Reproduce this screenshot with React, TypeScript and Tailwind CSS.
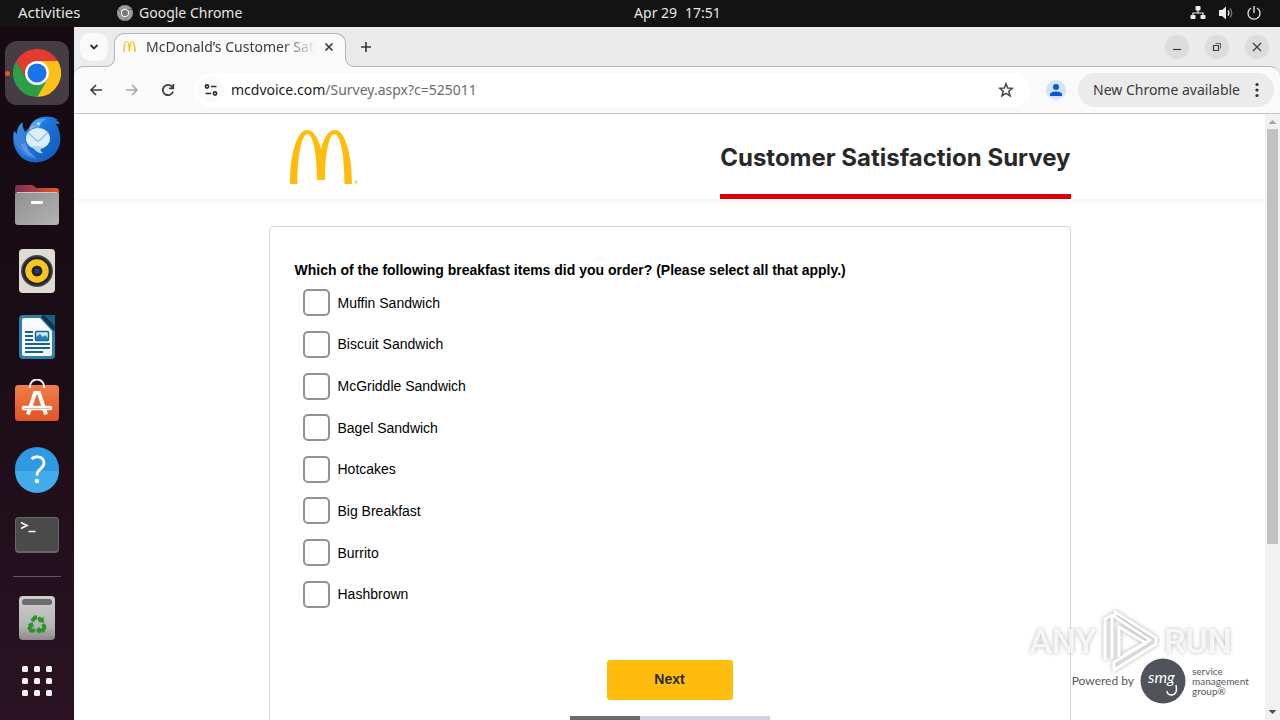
import type { ReactNode } from 'react';

const options = [
  'Muffin Sandwich',
  'Biscuit Sandwich',
  'McGriddle Sandwich',
  'Bagel Sandwich',
  'Hotcakes',
  'Big Breakfast',
  'Burrito',
  'Hashbrown',
];

const archPath =
  'M0 54C0 24 7 0 17 0C23 0 28 7 31 19C34 7 39 0 45 0C55 0 62 24 62 54H54.5C54.5 26 50.5 4 44.5 4C39 4 35 24 35 50H27C27 24 23 4 17.5 4C11.5 4 7.5 26 7.5 54Z';

function ChromeIcon() {
  return (
    <svg viewBox="0 0 48 48" className="size-12">
      <path d="M24 12H44.8A24 24 0 0 1 24 48L34.4 30Z" fill="#fbc116" />
      <path d="M34.4 30L24 48A24 24 0 0 1 3.2 12L13.6 30Z" fill="#2a9f46" />
      <path d="M24 12H44.8A24 24 0 0 0 3.2 12L13.6 30Z" fill="#e33b2e" />
      <path d="M24 24L34.4 30L24 48L22 36Z" fill="#2a9f46" />
      <circle cx="24" cy="24" r="12" fill="#fff" />
      <circle cx="24" cy="24" r="9.6" fill="#1a73e8" />
    </svg>
  );
}

function ThunderbirdIcon() {
  return (
    <svg viewBox="0 0 48 48" className="size-12">
      <defs>
        <linearGradient id="bird" x1="0" y1="0" x2="1" y2="1">
          <stop offset="0" stopColor="#3fa3f3" />
          <stop offset=".5" stopColor="#1b70d6" />
          <stop offset="1" stopColor="#1256b8" />
        </linearGradient>
      </defs>
      <path
        d="M10 7C6 10 4 13 4 19L1 16C-1 26 1 34 7 41C13 47 22 49 31 46C42 42 49 32 47 20C46 15 45 12 43 9H47C45 5 43 5 41 5H45C40 1 34 1 30 2C23 3 18 7 16 13L12 17C10 13 9 11 10 7Z"
        fill="url(#bird)"
      />
      <path d="M17 13C19 6 26 3 33 4C29 6 27 9 26 13Z" fill="#4ba7f5" />
      <path d="M1 19C2 33 10 43 25 44C16 40 12 33 12 24L9 15C6 18 5 21 5 24Z" fill="#3b83df" />
      <path d="M8 29C10 37 15 41 23 42C17 38 14 33 13 28Z" fill="#7d9fe6" opacity=".6" />
      <path d="M17 12L22 10C20 13 18 15 16 15Z" fill="#d99ab8" />
      <ellipse cx="25" cy="23.5" rx="12" ry="10.5" fill="#d9effc" />
      <path d="M19 31C22 36 26 39 30 38C27 36 27 34 29 31Z" fill="#acd6fa" />
      <path d="M15 17.5L23 25Q25 27 27 25L35 17" fill="none" stroke="#9cc3e0" strokeWidth="1.6" />
      <circle cx="25.5" cy="8.8" r="1.2" fill="#fff" />
    </svg>
  );
}

function FilesIcon() {
  return (
    <svg viewBox="0 0 48 48" className="size-12">
      <defs>
        <linearGradient id="folder-back" x1="0" x2="1">
          <stop offset="0" stopColor="#7d2d58" />
          <stop offset="1" stopColor="#e95420" />
        </linearGradient>
        <linearGradient id="folder-front" x1="0" y1="0" x2="1" y2="1">
          <stop offset="0" stopColor="#8f8f8f" />
          <stop offset="1" stopColor="#b3b3b3" />
        </linearGradient>
      </defs>
      <path d="M2 16V7Q2 4 5 4H18Q20 4 21 5L23 7H43Q46 7 46 10V16Z" fill="url(#folder-back)" />
      <rect x="2" y="11" width="44" height="33" rx="3" fill="url(#folder-front)" />
      <path d="M4 11.5H44" stroke="#c8c8c8" />
      <rect x="18" y="20" width="12" height="3" rx="1" fill="#fff" />
    </svg>
  );
}

function RhythmboxIcon() {
  return (
    <svg viewBox="0 0 48 48" className="size-12">
      <rect x="6" y="2" width="36" height="44" rx="4" fill="#dfdbd2" />
      <circle cx="24" cy="24" r="16" fill="#4a4a52" />
      <circle cx="24" cy="24" r="14.5" fill="#24242a" />
      <circle cx="24" cy="24" r="8.5" fill="none" stroke="#f7c520" strokeWidth="6.5" />
      <circle cx="24" cy="24" r="5.3" fill="#1c252c" />
      <circle cx="24" cy="24" r="2.5" fill="#34424b" />
    </svg>
  );
}

function WriterIcon() {
  return (
    <svg viewBox="0 0 48 48" className="size-12">
      <path d="M10 2H30L42 15V42Q42 46 38 46H10Q6 46 6 42V6Q6 2 10 2Z" fill="#2b7fae" />
      <path d="M31 2H42V14Z" fill="#175f86" />
      <path d="M29 3L42 17" stroke="#0b344d" strokeWidth="3" />
      <path d="M9 7Q9 5 11 5H27L39 18V41Q39 43 37 43H11Q9 43 9 41Z" fill="#f7fbff" />
      <path
        d="M12 19H20M12 23H20M12 27H20M12 31H37M12 35H37M12 39H30"
        stroke="#16658f"
        strokeWidth="2"
      />
      <rect x="22.5" y="18.5" width="13" height="9" rx="1" fill="#cbe7f7" stroke="#16658f" strokeWidth="1.5" />
      <path d="M23 27V24L27 21L30 24L32 22L35 25V27Z" fill="#2b7fae" />
    </svg>
  );
}

function SoftwareIcon() {
  return (
    <svg viewBox="0 0 48 48" className="size-12">
      <defs>
        <linearGradient id="bag" x1="0" y1="0" x2="0" y2="1">
          <stop offset="0" stopColor="#f27d4a" />
          <stop offset="1" stopColor="#dd5623" />
        </linearGradient>
      </defs>
      <rect x="2" y="6" width="44" height="36" rx="3.5" fill="url(#bag)" />
      <path d="M17 9V7A7 6.5 0 0 1 31 7V9" fill="none" stroke="#f4efe8" strokeWidth="2" />
      <path d="M15 35.5L22 14H26L33 35.5" fill="none" stroke="#fff" strokeWidth="4" />
      <path d="M11 29H37" stroke="#fff" strokeWidth="4.5" strokeLinecap="round" />
      <path d="M11 29.5H37" stroke="#f3b79f" strokeWidth="1" />
    </svg>
  );
}

function HelpIcon() {
  return (
    <svg viewBox="0 0 48 48" className="size-12">
      <circle cx="24" cy="24" r="22" fill="#2f9ae3" />
      <path d="M2 26A22 22 0 0 0 46 26Z" fill="#43aceb" />
      <path
        d="M18.5 14Q21 11.5 25 11.8Q31 12.3 31 18Q31 21 27.5 23.8Q24 26.5 24 30.5"
        fill="none"
        stroke="#fff"
        strokeWidth="2.8"
      />
      <circle cx="24" cy="36" r="2.3" fill="#fff" />
    </svg>
  );
}

function TerminalIcon() {
  return (
    <svg viewBox="0 0 48 48" className="size-12">
      <rect x="2" y="6" width="44" height="36" rx="4" fill="#666" />
      <rect x="3" y="7" width="42" height="33" rx="3" fill="#4a4a4a" />
      <path d="M8 11.5L14 14.5L8 17.5M15.5 20.5H22.5" fill="none" stroke="#fff" strokeWidth="1.7" />
    </svg>
  );
}

function TrashIcon() {
  return (
    <svg viewBox="0 0 48 48" className="size-12">
      <defs>
        <linearGradient id="bin" x1="0" y1="0" x2="0" y2="1">
          <stop offset="0" stopColor="#cfcfcf" />
          <stop offset=".7" stopColor="#b4b4b4" />
          <stop offset="1" stopColor="#8e868c" />
        </linearGradient>
      </defs>
      <rect x="6" y="2" width="36" height="44" rx="4" fill="url(#bin)" />
      <rect x="9" y="5" width="30" height="6" rx="2.5" fill="#6c6c6c" />
      <g fill="none" stroke="#2b9327" strokeWidth="3.8">
        <path d="M19 27L22 23.5H24" />
        <path d="M25.5 23.5L28.5 27" />
        <path d="M30 30L31.5 33L30 36.5H26" />
        <path d="M22 36.5H18L16.5 34L18 31" />
      </g>
      <path d="M30.5 22.5L31 29L25 27.5ZM26.5 32.5V40L22.5 36.5ZM14.5 30.5L19.5 28L21 33.5Z" fill="#2b9327" />
    </svg>
  );
}

function AppsIcon() {
  return (
    <svg viewBox="0 0 30 30" className="size-[30px]" fill="#f6f3f5">
      {[0, 12, 24].map((y) =>
        [0, 12, 24].map((x) => <rect key={`${x}-${y}`} x={x} y={y} width="6" height="6" rx="1.5" />),
      )}
    </svg>
  );
}

function DockItem({ label, children }: { label: string; children: ReactNode }) {
  return (
    <button aria-label={label} className="flex h-[66px] w-full shrink-0 items-center justify-center">
      {children}
    </button>
  );
}

function Dock() {
  return (
    <nav
      aria-label="Dock"
      className="flex w-[74px] shrink-0 flex-col bg-linear-to-b from-[#150a11] via-[#1b0d16] to-[#2b1322] pt-[13px]"
    >
      <button aria-label="Google Chrome" className="relative flex h-[66px] w-full shrink-0 items-center justify-center">
        <span className="flex size-16 items-center justify-center rounded-xl bg-[#463c44]">
          <ChromeIcon />
        </span>
        <span className="absolute left-[5px] size-[5px] rounded-full bg-[#e95420]" />
      </button>
      <DockItem label="Thunderbird"><ThunderbirdIcon /></DockItem>
      <DockItem label="Files"><FilesIcon /></DockItem>
      <DockItem label="Rhythmbox"><RhythmboxIcon /></DockItem>
      <DockItem label="LibreOffice Writer"><WriterIcon /></DockItem>
      <DockItem label="Ubuntu Software"><SoftwareIcon /></DockItem>
      <DockItem label="Help"><HelpIcon /></DockItem>
      <DockItem label="Terminal"><TerminalIcon /></DockItem>
      <div className="mx-[13px] my-2 h-px shrink-0 bg-[#65595f]" />
      <DockItem label="Trash"><TrashIcon /></DockItem>
      <button aria-label="Show applications" className="flex h-[60px] w-full shrink-0 items-center justify-center">
        <AppsIcon />
      </button>
    </nav>
  );
}

function TopBar() {
  return (
    <header className="flex h-[27px] shrink-0 items-center bg-[#131313] px-[18px] pb-px text-sm text-[#e6e6e6]">
      <button className="w-[75px] text-left text-[15px]">Activities</button>
      <div className="grid flex-1 grid-cols-[1fr_auto_1fr] items-center">
        <button className="ml-6 flex items-center gap-1.5 justify-self-start">
          <svg viewBox="0 0 16 16" className="size-4">
            <circle cx="8" cy="8" r="8" fill="#9b9b9b" />
            <path d="M8 4.5H15M5 10L1.5 4M11 10L7.5 16" stroke="#666" />
            <circle cx="8" cy="8" r="3.6" fill="#777" stroke="#eee" strokeWidth="1.2" />
          </svg>
          Google Chrome
        </button>
        <button className="flex gap-2">
          <span>Apr 29</span>
          <span>17:51</span>
        </button>
        <div className="flex items-center justify-end gap-3">
          <svg viewBox="0 0 16 16" className="size-4" fill="#eee">
            <rect x="5.5" y="1" width="5" height="4.5" rx=".8" />
            <rect x=".5" y="10" width="5" height="4" rx=".8" />
            <rect x="10.5" y="10" width="5" height="4" rx=".8" />
            <path d="M3 10V8H13V10M8 5V8" fill="none" stroke="#eee" strokeWidth="1.2" />
          </svg>
          <svg viewBox="0 0 16 16" className="size-4" fill="none" stroke="#eee" strokeWidth="1.3">
            <path d="M1 5H4L8 1.5V14.5L4 11H1Z" fill="#eee" stroke="none" />
            <path d="M10 5.5Q11.8 8 10 10.5" />
            <path d="M12 3.5Q15.5 8 12 12.5" stroke="#777" />
          </svg>
          <svg viewBox="0 0 16 16" className="size-4" fill="none" stroke="#eee" strokeWidth="1.3">
            <path d="M5 3A6 6 0 1 0 11 3M8 1V8" />
          </svg>
        </div>
      </div>
    </header>
  );
}

function WindowControl({ label, children }: { label: string; children: ReactNode }) {
  return (
    <button aria-label={label} className="flex size-6 items-center justify-center rounded-full bg-[#dcdcdc]">
      <svg viewBox="0 0 12 12" className="size-3" fill="none" stroke="#3c3c3c" strokeWidth="1.2">
        {children}
      </svg>
    </button>
  );
}

function TabStrip() {
  return (
    <div className="flex h-[39px] items-center bg-[#ebebeb] pr-[11px] pl-1.5">
      <button aria-label="Search tabs" className="flex size-7 items-center justify-center rounded-[10px] bg-[#fafafa]">
        <svg viewBox="0 0 12 12" className="size-3" fill="none" stroke="#333" strokeWidth="1.8">
          <path d="M2.5 4L6 7.5L9.5 4" />
        </svg>
      </button>
      <div className="relative z-10 mt-1.5 -mb-px ml-1.5 flex h-[34px] w-[232px] items-center self-start rounded-t-[10px] border border-b-0 border-[#b4b4b8] bg-[#fafafa] pr-2 pb-2 pl-2">
        <svg viewBox="0 0 11 10" className="absolute bottom-0 -left-[10px] h-2.5 w-[11px]">
          <path d="M0 10V9.5Q9.5 9.5 9.5 0H11V10Z" fill="#fafafa" />
          <path d="M0 9.5Q9.5 9.5 9.5 0" fill="none" stroke="#b4b4b8" />
        </svg>
        <svg viewBox="0 0 11 10" className="absolute -right-[10px] bottom-0 h-2.5 w-[11px]">
          <path d="M11 10V9.5Q1.5 9.5 1.5 0H0V10Z" fill="#fafafa" />
          <path d="M11 9.5Q1.5 9.5 1.5 0" fill="none" stroke="#b4b4b8" />
        </svg>
        <svg viewBox="0 0 62 54" className="h-[11px] w-[13px] shrink-0">
          <path d={archPath} fill="#ffbc0d" />
        </svg>
        <span className="ml-2.5 w-[170px] overflow-hidden mask-r-from-80% mask-r-to-100% text-sm whitespace-nowrap text-[#3a3a3a]">
          McDonald’s Customer Satisfaction Survey
        </span>
        <button aria-label="Close tab" className="ml-auto flex size-4 shrink-0 items-center justify-center">
          <svg viewBox="0 0 10 10" className="size-2.5" stroke="#333" strokeWidth="1.6">
            <path d="M1.5 1.5L8.5 8.5M8.5 1.5L1.5 8.5" />
          </svg>
        </button>
      </div>
      <button aria-label="New tab" className="ml-3 flex size-4 items-center justify-center">
        <svg viewBox="0 0 12 12" className="size-3" stroke="#333" strokeWidth="1.6">
          <path d="M6 1V11M1 6H11" />
        </svg>
      </button>
      <div className="ml-auto flex gap-4">
        <WindowControl label="Minimize"><path d="M2 8.5H10" /></WindowControl>
        <WindowControl label="Restore">
          <path d="M2.5 4.5H7.5V9.5H2.5Z" />
          <path d="M4.5 2.5H9.5V7.5" strokeWidth=".8" />
        </WindowControl>
        <WindowControl label="Close"><path d="M2 2L10 10M10 2L2 10" /></WindowControl>
      </div>
    </div>
  );
}

function Toolbar() {
  return (
    <div className="bg-[#ebebeb]">
      <div className="flex h-12 items-center rounded-t-[10px] border-t border-b border-t-[#b4b4b8] border-b-[#c4c4c4] bg-[#fafafa] pr-1.5 pl-3">
        <div className="flex gap-4">
          <button aria-label="Back" className="flex size-5 items-center justify-center">
            <svg viewBox="0 0 14 14" className="size-3.5" fill="none" stroke="#3c3c3c" strokeWidth="1.6">
              <path d="M13 7H2.5M7 2L2 7L7 12" />
            </svg>
          </button>
          <button aria-label="Forward" className="flex size-5 items-center justify-center">
            <svg viewBox="0 0 14 14" className="size-3.5" fill="none" stroke="#a8a8a8" strokeWidth="1.6">
              <path d="M1 7H11.5M7 2L12 7L7 12" />
            </svg>
          </button>
          <button aria-label="Reload" className="flex size-5 items-center justify-center">
            <svg viewBox="0 0 14 14" className="size-3.5" fill="none" stroke="#3c3c3c" strokeWidth="1.7">
              <path d="M12 8.5A5.2 5.2 0 1 1 10.8 3.4L12.2 5M12.3 1V5.3H8" />
            </svg>
          </button>
        </div>
        <div className="ml-4 flex h-[34px] flex-1 items-center rounded-full bg-white pr-4 pl-1">
          <button aria-label="View site information" className="flex size-[26px] items-center justify-center rounded-full bg-[#fafafa]">
            <svg viewBox="0 0 14 14" className="size-3.5" fill="none" stroke="#2c2c2c" strokeWidth="1.6">
              <circle cx="3" cy="3.5" r="1.6" />
              <path d="M7 3.5H12.5M1.5 10.5H7" />
              <circle cx="11" cy="10.5" r="1.6" />
            </svg>
          </button>
          <div className="ml-[7px] text-sm text-[#6b6b6b]">
            <span className="text-[#1c1c1c]">mcdvoice.com</span>/Survey.aspx?c=525011
          </div>
          <button aria-label="Bookmark this tab" className="ml-auto">
            <svg viewBox="0 0 16 16" className="size-4" fill="none" stroke="#454545" strokeWidth="1.5">
              <path d="M8 1.8L9.7 6L14.3 6.3L10.8 9.2L12 13.8L8 11.3L4 13.8L5.2 9.2L1.7 6.3L6.3 6Z" />
            </svg>
          </button>
        </div>
        <button aria-label="Profile" className="ml-4">
          <svg viewBox="0 0 20 20" className="size-5">
            <circle cx="10" cy="10" r="10" fill="#d3e3fd" />
            <circle cx="10" cy="7" r="3" fill="#0b57d0" />
            <path d="M4 16V14.5Q4 11.5 10 11.5T16 14.5V16Z" fill="#0b57d0" />
          </svg>
        </button>
        <button className="ml-3 flex h-[34px] w-[196px] items-center justify-between rounded-full bg-[#ebebeb] px-[15px] text-sm text-[#3a3a3a]">
          New Chrome available
          <svg viewBox="0 0 4 16" className="h-4 w-1" fill="#333">
            <circle cx="2" cy="2.5" r="1.6" />
            <circle cx="2" cy="8" r="1.6" />
            <circle cx="2" cy="13.5" r="1.6" />
          </svg>
        </button>
      </div>
    </div>
  );
}

function SurveyPage() {
  return (
    <main className="min-w-0 flex-1 overflow-hidden bg-white font-['Liberation_Sans',sans-serif]">
      <header className="shadow-[0_2px_5px_rgba(0,0,0,0.05)]">
        <div className="mx-auto flex h-[85px] max-w-[802px] items-stretch justify-between pl-[21px]">
          <svg viewBox="0 0 68 54" className="mt-4 h-[54px] w-[68px]" role="img" aria-label="McDonald’s">
            <path d={archPath} fill="#ffbc0d" />
            <circle cx="66" cy="52" r="1.2" fill="none" stroke="#f0bd45" />
          </svg>
          <h1 className="flex items-center border-b-[5px] border-[#db0007] pt-2 font-[Inter,sans-serif] text-2xl font-bold text-[#292929]">
            Customer Satisfaction Survey
          </h1>
        </div>
      </header>
      <form
        className="mx-auto mt-[27px] flex h-[600px] max-w-[802px] flex-col items-center rounded-[4px] border border-[#d6d6d6] px-[25px] pt-[33px] text-sm text-black"
        onSubmit={(e) => e.preventDefault()}
      >
        <fieldset className="w-full">
          <legend className="font-bold">
            Which of the following breakfast items did you order? (Please select all that apply.)
          </legend>
          <div className="mt-0.5 grid h-[333px] auto-rows-fr pl-2">
            {options.map((option) => (
              <label key={option} className="flex items-center justify-self-start">
                <input
                  type="checkbox"
                  className="mr-2 size-[27px] appearance-none rounded-[5px] border-2 border-[#929292] bg-white checked:bg-[#ffbc0d]"
                />
                {option}
              </label>
            ))}
          </div>
        </fieldset>
        <button type="submit" className="mt-[45px] h-10 w-[126px] shrink-0 rounded-[3px] bg-[#ffbc0d] pb-0.5 font-bold text-[#292929]">
          Next
        </button>
        <div role="progressbar" aria-label="Survey progress" aria-valuenow={35} className="mt-4 h-5 w-[200px] shrink-0 bg-[#d0d3df]">
          <div className="h-full w-[35%] bg-[#6b6b6b]" />
        </div>
      </form>
    </main>
  );
}

function Scrollbar() {
  return (
    <div className="flex w-[15px] shrink-0 flex-col items-center bg-[#f1f1f1]" aria-hidden="true">
      <svg viewBox="0 0 15 15" className="size-[15px] shrink-0">
        <path d="M3.5 10L7.5 6L11.5 10Z" fill="#a3a3a3" />
      </svg>
      <div className="w-full flex-1 px-0.5">
        <div className="h-[72%] bg-[#c1c1c1]" />
      </div>
      <svg viewBox="0 0 15 15" className="size-[15px] shrink-0">
        <path d="M3.5 5L7.5 9L11.5 5Z" fill="#505050" />
      </svg>
    </div>
  );
}

function PoweredBy() {
  return (
    <div className="absolute right-[29px] bottom-4 flex items-center font-[Lato,sans-serif] text-[#55585f]">
      <span className="mr-1.5 text-xs">Powered by</span>
      <svg viewBox="0 0 46 46" className="mr-1.5 size-[46px]">
        <circle cx="23" cy="23" r="22.5" fill="#50535c" />
        <text x="8" y="25" fill="#fff" fontSize="16" fontStyle="italic" fontFamily="Lato, sans-serif">
          smg
        </text>
        <path d="M36 27Q38 36 32 37Q27 37 27 33" fill="none" stroke="#fff" strokeWidth="1.5" />
      </svg>
      <div className="w-[59px] text-[10px] leading-[10px]">
        <div>service</div>
        <div>management</div>
        <div>group®</div>
      </div>
    </div>
  );
}

function Watermark() {
  return (
    <div className="pointer-events-none absolute right-12 bottom-[47px] flex items-center gap-1.5 font-[Roboto,sans-serif] text-[34px] leading-none font-medium text-white/80 drop-shadow-[0_0_2px_rgba(0,0,0,0.35)]">
      <span>ANY</span>
      <svg viewBox="0 0 56 64" className="h-16 w-14" fill="none" stroke="#fff" strokeWidth="3" strokeLinejoin="round">
        <path d="M3 51V10L10 6V50M17 48V18L44 34L12 53V61L54 35V29L13 3V8L48 31L20 47" />
      </svg>
      <span>RUN</span>
    </div>
  );
}

export default function App() {
  return (
    <div className="flex h-screen flex-col overflow-hidden font-['Noto_Sans',sans-serif]">
      <TopBar />
      <div className="flex min-h-0 flex-1">
        <Dock />
        <div className="relative flex min-w-0 flex-1 flex-col">
          <TabStrip />
          <Toolbar />
          <div className="flex min-h-0 flex-1">
            <SurveyPage />
            <Scrollbar />
          </div>
          <Watermark />
          <PoweredBy />
        </div>
      </div>
    </div>
  );
}
